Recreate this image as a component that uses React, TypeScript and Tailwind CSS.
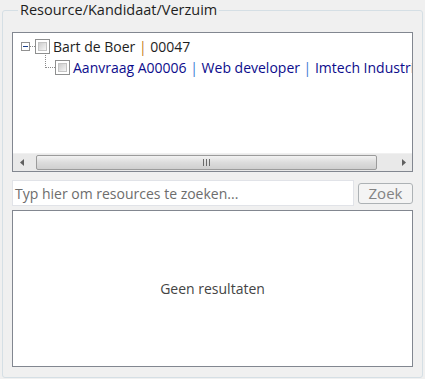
import React from 'react';

const font = { fontFamily: '"Open Sans", "Noto Sans", sans-serif' };

const Checkbox = () => (
  <span className="inline-block w-[15px] h-[15px] border border-[#8e8f8f] bg-white p-[2px] shrink-0">
    <span className="block w-full h-full border border-[#c4c4c4] bg-gradient-to-br from-[#cdcdcd] to-[#f6f6f6]" />
  </span>
);

const App = () => {
  return (
    <div className="w-[425px] h-[379px] bg-[#f0f0f0] text-[#1e1e1e] overflow-hidden pt-[10px]" style={font}>
      <div className="ml-[2px] w-[421px] h-[368px] border border-[#d5dfe5] rounded-[3px] px-[9px]">
        <div className="-mt-[9px] ml-[6px] w-fit px-[2px] bg-[#f0f0f0] text-[14.5px] leading-[16px] text-[#1e1e1e]">
          Resource/Kandidaat/Verzuim
        </div>

        {/* tree */}
        <div className="mt-[14px] h-[140px] border border-[#828790] bg-white flex flex-col">
          <div className="flex-1 overflow-hidden pt-[3px] text-[14px] leading-[21px] whitespace-nowrap">
            <div className="flex items-center h-[21px] pl-[8px]">
              <span className="w-[9px] h-[9px] border border-[#919191] bg-white flex items-center justify-center shrink-0">
                <span className="block w-[5px] h-[1px] bg-[#1b3f8b]" />
              </span>
              <span className="w-[5px] border-t border-dotted border-[#8a8a8a]" />
              <Checkbox />
              <span className="ml-[3px]">
                Bart de Boer <span className="text-[#c47a1c]">|</span> 00047
              </span>
            </div>
            <div className="flex items-center h-[21px] pl-[32px]">
              <span className="relative w-[10px] h-[21px] shrink-0">
                <span className="absolute left-0 top-[-4px] h-[15px] border-l border-dotted border-[#8a8a8a]" />
                <span className="absolute left-0 top-[10px] w-[10px] border-t border-dotted border-[#8a8a8a]" />
              </span>
              <Checkbox />
              <span className="ml-[3px] text-[#0c0c8c]">
                Aanvraag A00006 <span className="text-[#3a7ad6]">|</span> Web developer{' '}
                <span className="text-[#3a7ad6]">|</span> Imtech Industrial Services
              </span>
            </div>
          </div>
          {/* horizontal scrollbar */}
          <div className="h-[18px] flex bg-[#e9e9e9] border-t border-[#f0f0f0]">
            <div className="w-[17px] flex items-center justify-center">
              <svg width="4" height="7" viewBox="0 0 4 7">
                <path d="M4 0 L0 3.5 L4 7 Z" fill="#606060" />
              </svg>
            </div>
            <div className="flex-1 flex items-center pl-[6px] pr-[18px]">
              <div className="w-full h-[15px] rounded-[2px] border border-[#9b9b9b] bg-gradient-to-b from-[#f2f2f2] via-[#dcdcdc] to-[#cfcfcf] flex items-center justify-center gap-[2px]">
                <span className="w-[1px] h-[7px] bg-[#6a6a6a]" />
                <span className="w-[1px] h-[7px] bg-[#6a6a6a]" />
                <span className="w-[1px] h-[7px] bg-[#6a6a6a]" />
              </div>
            </div>
            <div className="w-[17px] flex items-center justify-center">
              <svg width="4" height="7" viewBox="0 0 4 7">
                <path d="M0 0 L4 3.5 L0 7 Z" fill="#606060" />
              </svg>
            </div>
          </div>
        </div>

        {/* search */}
        <div className="mt-[8px] flex items-center gap-[4px]">
          <div className="w-[342px] h-[26px] border border-[#e1e3e8] bg-white flex items-center px-[2px] text-[14px] text-[#6d6d6d]">
            Typ hier om resources te zoeken...
          </div>
          <div className="w-[55px] h-[21px] border border-[#adb2b5] rounded-[3px] bg-[#f4f4f4] flex items-center justify-center text-[15px] text-[#838383]">
            Zoek
          </div>
        </div>

        {/* results */}
        <div className="mt-[4px] h-[157px] border border-[#828790] bg-white flex items-center justify-center text-[14px] text-[#444444]">
          Geen resultaten
        </div>
      </div>
    </div>
  );
};

export default App;
